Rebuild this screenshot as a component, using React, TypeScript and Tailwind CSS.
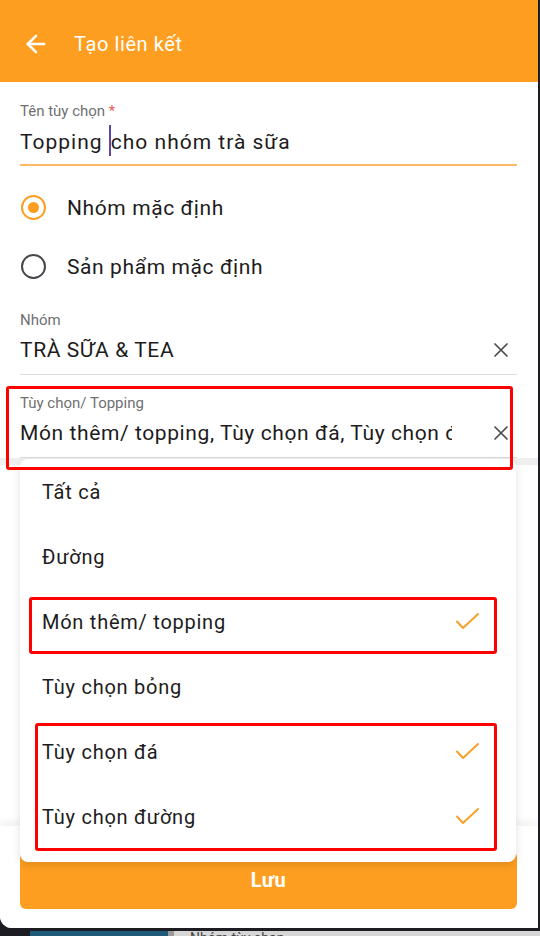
import { ArrowLeft } from "lucide-react";

const ORANGE = "#fd9e20";

function ClearIcon() {
  return (
    <svg width="24" height="24" viewBox="0 0 24 24" className="shrink-0">
      <path d="M6 6 18 18M18 6 6 18" stroke="#4a4a4a" strokeWidth="1.7" strokeLinecap="round" />
    </svg>
  );
}

function CheckIcon() {
  return (
    <svg width="26" height="20" viewBox="0 0 26 20" className="shrink-0">
      <polyline
        points="2,9.5 8,16 23,2"
        fill="none"
        stroke="#f7a02a"
        strokeWidth="2"
        strokeLinecap="round"
        strokeLinejoin="round"
      />
    </svg>
  );
}

function Radio({ checked, label }: { checked: boolean; label: string }) {
  return (
    <div className="flex h-[59px] items-center">
      <span
        className={`ml-[1px] flex h-[25px] w-[25px] items-center justify-center rounded-full border-[2.5px] ${
          checked ? "border-[#fd9e20]" : "border-[#46464c]"
        }`}
      >
        {checked && <span className="h-[11px] w-[11px] rounded-full bg-[#fd9e20]" />}
      </span>
      <span className="ml-[21px] text-[21px] leading-[28px] tracking-[0.6px] text-[#1d1b20]">{label}</span>
    </div>
  );
}

const options = [
  { name: "Tất cả", checked: false },
  { name: "Đường", checked: false },
  { name: "Món thêm/ topping", checked: true },
  { name: "Tùy chọn bỏng", checked: false },
  { name: "Tùy chọn đá", checked: true },
  { name: "Tùy chọn đường", checked: true },
];

export default function App() {
  return (
    <div className="relative h-[936px] w-[540px] overflow-hidden bg-[#1c1c22] font-['Roboto','Noto_Sans',sans-serif]">
      <div className="flex h-[928px] w-[538px] flex-col overflow-hidden rounded-bl-[12px] bg-white">
        {/* app bar */}
        <div className="flex h-[82px] shrink-0 items-center pt-[6px]" style={{ background: ORANGE }}>
          <ArrowLeft size={28} strokeWidth={2.2} className="ml-[22px] text-white" />
          <span className="ml-[24px] text-[20px] leading-[28px] tracking-[0.6px] text-white">Tạo liên kết</span>
        </div>

        {/* form */}
        <div className="flex flex-1 flex-col pl-[20px] pr-[21px]">
          <div className="mt-[20px] border-b-2 border-[#fcb966] pb-[9px]">
            <div className="h-[18px] text-[15px] leading-[18px] text-[#6f6f73]">
              Tên tùy chọn <span className="text-[#f05a5a]">*</span>
            </div>
            <div className="mt-[5px] h-[30px] text-[21px] leading-[28px] tracking-[1px] text-[#1d1b20]">
              Topping{" "}
              <span className="inline-block h-[31px] w-[2px] bg-[#5b47a8] align-[-7px]" />
              cho nhóm trà sữa
            </div>
          </div>

          <div className="mt-[12px]">
            <Radio checked label="Nhóm mặc định" />
            <Radio checked={false} label="Sản phẩm mặc định" />
          </div>

          <div className="mt-[15px] border-b border-[#dcdcdc] pb-[10px]">
            <div className="h-[18px] text-[15px] leading-[18px] text-[#6f6f73]">Nhóm</div>
            <div className="mt-[7px] flex h-[28px] items-center justify-between">
              <span className="text-[21px] leading-[28px] tracking-[0.6px] text-[#1d1b20]">TRÀ SỮA &amp; TEA</span>
              <span className="mr-[4px]">
                <ClearIcon />
              </span>
            </div>
          </div>

          <div className="mt-[19px] border-b border-[#dcdcdc] pb-[10px]">
            <div className="h-[18px] text-[15px] leading-[18px] text-[#6f6f73]">Tùy chọn/ Topping</div>
            <div className="mt-[7px] flex h-[28px] items-center justify-between">
              <span className="w-[432px] overflow-hidden whitespace-nowrap text-[21px] leading-[28px] tracking-[0.6px] text-[#1d1b20]">
                Món thêm/ topping, Tùy chọn đá, Tùy chọn đường
              </span>
              <span className="mr-[4px]">
                <ClearIcon />
              </span>
            </div>
          </div>
        </div>

        <div className="h-[7px] w-full shrink-0 bg-[#efefef]" />
        <div className="flex-1" />

        {/* bottom bar */}
        <div className="h-[102px] shrink-0 bg-white px-[20px] pt-[25px] shadow-[0_-5px_8px_rgba(0,0,0,0.05)]">
          <button
            type="button"
            className="flex h-[58px] w-[497px] items-center justify-center rounded-[6px] text-[20px] font-bold tracking-[0.5px] text-white"
            style={{ background: ORANGE }}
          >
            Lưu
          </button>
        </div>
      </div>

      {/* page behind the sheet */}
      <div className="mt-[3px] flex h-[5px]">
        <div className="w-[30px]" />
        <div className="w-[138px] bg-[#1e5b7a]" />
        <div className="w-[6px] bg-[#9a9a9a]" />
        <div className="flex-1 overflow-hidden bg-[#d6d6d6] pl-[16px] text-[14px] leading-[14px] text-[#444]">
          Nhóm tùy chọn
        </div>
      </div>

      {/* dropdown menu */}
      <div className="absolute left-[20px] top-[459px] w-[496px] rounded-[8px] bg-white pb-[13px] shadow-[0_3px_8px_rgba(0,0,0,0.12)]">
        {options.map((o) => (
          <div key={o.name} className="flex h-[65px] items-center justify-between pl-[22px] pr-[35px]">
            <span className="text-[20px] leading-[28px] tracking-[0.75px] text-[#1d1b20]">{o.name}</span>
            {o.checked && <CheckIcon />}
          </div>
        ))}
      </div>

      {/* annotation boxes */}
      <div className="pointer-events-none absolute left-[6px] top-[386px] h-[84px] w-[507px] rounded-[3px] border-[3px] border-[#ff0000]" />
      <div className="pointer-events-none absolute left-[29px] top-[597px] h-[57px] w-[468px] rounded-[3px] border-[3px] border-[#ff0000]" />
      <div className="pointer-events-none absolute left-[35px] top-[723px] h-[128px] w-[462px] rounded-[3px] border-[3px] border-[#ff0000]" />
    </div>
  );
}
